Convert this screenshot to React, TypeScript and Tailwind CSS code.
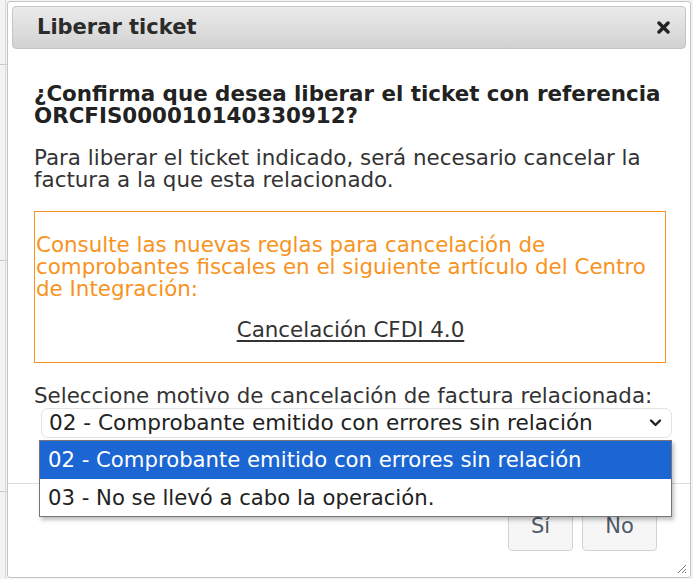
import React from "react";

export default function App() {
  const font = { fontFamily: '"DejaVu Sans", Verdana, sans-serif' };
  return (
    <div className="relative w-[693px] h-[579px] overflow-hidden bg-[#f3f3f3]" style={font}>
      {/* background page lines on left strip */}
      <div className="absolute left-0 top-[64px] w-[8px] h-px bg-[#c9c9c9]" />
      <div className="absolute left-0 top-[260px] w-[8px] h-px bg-[#c9c9c9]" />
      <div className="absolute left-0 top-[491px] w-[8px] h-px bg-[#c9c9c9]" />
      <div className="absolute left-[5px] top-0 w-px h-[579px] bg-[#dcdcdc]" />

      {/* dialog */}
      <div className="absolute left-[7px] top-px w-[684px] h-[577px] bg-white border border-[#c5c5c5] rounded-[3px] flex flex-col">
        {/* title bar */}
        <div className="mx-[4px] mt-[4px] h-[43px] shrink-0 rounded-[4px] border border-[#c5c5c5] bg-gradient-to-b from-[#ebebeb] to-[#d2d2d2] flex items-center justify-between pl-[24px] pr-[15px]">
          <span className="text-[21px] font-bold text-[#2b2b2b]">Liberar ticket</span>
          <svg width="13" height="13" viewBox="0 0 13 13">
            <path d="M2 2 L11 11 M11 2 L2 11" stroke="#222" strokeWidth="3.4" strokeLinecap="round" />
          </svg>
        </div>

        {/* content */}
        <div className="flex-1 pl-[26px] pr-[24px] pt-[34px] text-[21.4px] leading-[22px] text-[#333333]">
          <p className="font-bold text-[#222222]">
            ¿Confirma que desea liberar el ticket con referencia ORCFIS000010140330912?
          </p>
          <p className="mt-[20px]">
            Para liberar el ticket indicado, será necesario cancelar la factura a la que esta relacionado.
          </p>
          <div className="mt-[20px] w-[632px] border border-[#f7931e] pl-[1px] pt-[22px] pb-[21px] text-[#f7931e]">
            <p>
              Consulte las nuevas reglas para cancelación de comprobantes fiscales en el siguiente artículo del Centro de Integración:
            </p>
            <p className="mt-[19px] text-center">
              <span className="underline text-[#333333] underline-offset-[3px]">Cancelación CFDI 4.0</span>
            </p>
          </div>
          <p className="mt-[22px]">Seleccione motivo de cancelación de factura relacionada:</p>
          <div className="mt-px ml-[7px] w-[631px] h-[30px] rounded-[7px] border border-[#e2e2e2] bg-white flex items-center justify-between pl-[7px] pr-[9px] text-[21.6px] text-[#222222]">
            <span>02 - Comprobante emitido con errores sin relación</span>
            <svg width="13" height="10" viewBox="0 0 13 10">
              <path d="M2 2.5 L6.5 7 L11 2.5" fill="none" stroke="#222" strokeWidth="2.4" strokeLinecap="round" strokeLinejoin="round" />
            </svg>
          </div>
        </div>

        {/* button pane */}
        <div className="h-[94px] shrink-0 border-t border-[#dddddd] flex justify-end items-start pt-[19px] pr-[33px] gap-[9px]">
          <button className="w-[65px] h-[48px] rounded-[4px] border border-[#d3d3d3] bg-[#f6f6f6] text-[21px] text-[#4f5a68]">Sí</button>
          <button className="w-[75px] h-[48px] rounded-[4px] border border-[#d3d3d3] bg-[#f6f6f6] text-[21px] text-[#4f5a68]">No</button>
        </div>

        {/* resize handle */}
        <svg className="absolute right-[3px] bottom-[3px]" width="12" height="12" viewBox="0 0 12 12">
          <path d="M11 3 L3 11 M11 7 L7 11 M11 10 L10 11" stroke="#777" strokeWidth="1" />
        </svg>
      </div>

      {/* open select dropdown */}
      <div className="absolute left-[39px] top-[440px] w-[633px] h-[77px] bg-white border border-[#767676] shadow-[2px_3px_4px_rgba(0,0,0,0.25)] text-[21.2px] leading-[22px]">
        <div className="h-[38px] bg-[#1b66d2] text-white flex items-center pl-[8px]">
          02 - Comprobante emitido con errores sin relación
        </div>
        <div className="h-[37px] text-[#222222] flex items-center pl-[8px]">
          03 - No se llevó a cabo la operación.
        </div>
      </div>
    </div>
  );
}
